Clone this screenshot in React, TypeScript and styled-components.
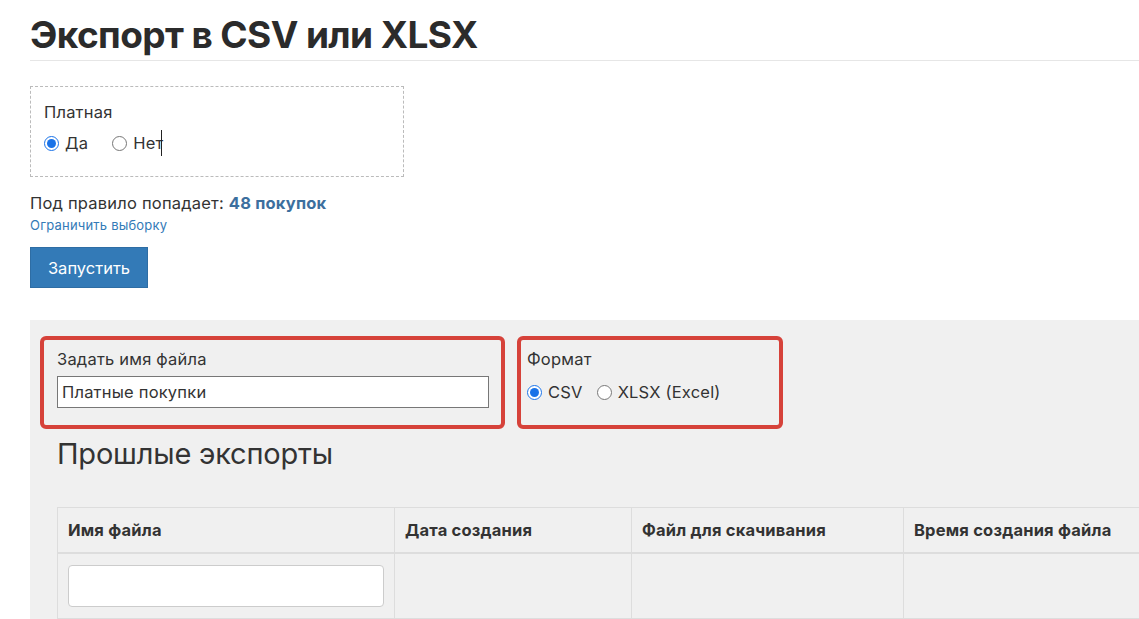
import React from 'react';
import styled, { createGlobalStyle } from 'styled-components';

const GlobalStyle = createGlobalStyle`
  html, body {
    margin: 0;
    padding: 0;
    background: #fff;
    overflow: hidden;
  }
  body {
    font-family: Inter, "Noto Sans", Arial, sans-serif;
    color: #333;
  }
`;

const Page = styled.div`
  width: 1260px;
  padding-left: 30px;
`;

const Title = styled.h1`
  margin: 0;
  padding-top: 14px;
  font-size: 37px;
  font-weight: 700;
  line-height: 42px;
  letter-spacing: -0.6px;
  color: #2b2b2b;
  padding-bottom: 4px;
  border-bottom: 1px solid #e6e6e6;
`;

const FilterBox = styled.div`
  margin-top: 25px;
  width: 374px;
  height: 91px;
  box-sizing: border-box;
  border: 1px dashed #bbb;
  padding: 14px 13px;
`;

const Label = styled.div`
  font-size: 16.5px;
  letter-spacing: 0.2px;
  line-height: 22px;
  color: #333;
`;

const RadioRow = styled.div<{ $gap?: number; $top?: number }>`
  display: flex;
  align-items: center;
  gap: ${(p) => p.$gap ?? 16}px;
  margin-top: ${(p) => p.$top ?? 8}px;
`;

const RadioLabel = styled.label`
  display: flex;
  align-items: center;
  gap: 6px;
  font-size: 16.5px;
  letter-spacing: 0.2px;
  color: #333;

  input {
    margin: 0;
    width: 15px;
    height: 15px;
    accent-color: #1a73e8;
  }
`;

const Caret = styled.span`
  display: inline-block;
  width: 1px;
  height: 26px;
  background: #222;
  margin-left: -8px;
`;

const Summary = styled.div`
  margin-top: 16px;
  font-size: 16.5px;
  letter-spacing: 0.2px;
  line-height: 20px;

  b {
    color: #3c6f9e;
    font-weight: 700;
  }
`;

const LinkText = styled.a`
  display: block;
  margin-top: 2px;
  font-size: 13px;
  letter-spacing: 0.2px;
  line-height: 20px;
  color: #337ab7;
  text-decoration: none;
`;

const RunButton = styled.button`
  margin-top: 12px;
  height: 41px;
  width: 118px;
  border: 1px solid #2e6da4;
  background: #337ab7;
  color: #fff;
  font-family: inherit;
  font-size: 16.5px;
  padding: 0;
`;

const Panel = styled.div`
  margin-top: 32px;
  background: #f0f0f0;
  padding: 16px 0 20px 10px;
  min-height: 300px;
`;

const Options = styled.div`
  display: flex;
  gap: 12px;
`;

const RedBox = styled.div<{ $width: number }>`
  width: ${(p) => p.$width}px;
  height: 93px;
  box-sizing: border-box;
  border: 4px solid #d6423a;
  border-radius: 6px;
  padding: 8px 13px;
`;

const FormatBox = styled(RedBox)`
  padding-left: 6px;
`;

const NameInput = styled.input`
  margin-top: 6px;
  width: 432px;
  height: 32px;
  box-sizing: border-box;
  border: 1px solid #777;
  padding: 0 4px;
  font-family: inherit;
  font-size: 16.5px;
  letter-spacing: 0.2px;
  color: #333;
  background: #fff;
`;

const SubTitle = styled.h2`
  margin: 5px 0 0 17px;
  font-size: 29px;
  font-weight: 400;
  line-height: 40px;
  letter-spacing: -0.2px;
  color: #333;
`;

const Table = styled.table`
  margin: 33px 0 0 17px;
  border-collapse: collapse;
  table-layout: fixed;
`;

// $w is the full column width; padding and border take 21px of it
const Th = styled.th<{ $w: number }>`
  width: ${(p) => p.$w - 21}px;
  text-align: left;
  font-size: 16.5px;
  letter-spacing: 0.2px;
  font-weight: 700;
  color: #333;
  height: 44px;
  padding: 0 10px;
  border: 1px solid #ddd;
  border-bottom: 2px solid #ddd;
  white-space: nowrap;
`;

const Td = styled.td`
  height: 64px;
  padding: 0 10px;
  border: 1px solid #ddd;
`;

const FilterInput = styled.input`
  width: 100%;
  height: 42px;
  box-sizing: border-box;
  border: 1px solid #ccc;
  border-radius: 4px;
  background: #fff;
`;

export default function App() {
  return (
    <Page>
      <GlobalStyle />
      <Title>Экспорт в CSV или XLSX</Title>

      <FilterBox>
        <Label>Платная</Label>
        <RadioRow $gap={24} $top={7}>
          <RadioLabel>
            <input type="radio" name="paid" defaultChecked />
            Да
          </RadioLabel>
          <RadioLabel>
            <input type="radio" name="paid" />
            Нет<Caret />
          </RadioLabel>
        </RadioRow>
      </FilterBox>

      <Summary>
        Под правило попадает: <b>48 покупок</b>
      </Summary>
      <LinkText href="#">Ограничить выборку</LinkText>
      <RunButton>Запустить</RunButton>

      <Panel>
        <Options>
          <RedBox $width={465}>
            <Label>Задать имя файла</Label>
            <NameInput defaultValue="Платные покупки" />
          </RedBox>
          <FormatBox $width={266}>
            <Label>Формат</Label>
            <RadioRow $gap={14} $top={12}>
              <RadioLabel>
                <input type="radio" name="fmt" defaultChecked />
                CSV
              </RadioLabel>
              <RadioLabel>
                <input type="radio" name="fmt" />
                XLSX (Excel)
              </RadioLabel>
            </RadioRow>
          </FormatBox>
        </Options>

        <SubTitle>Прошлые экспорты</SubTitle>

        <Table>
          <thead>
            <tr>
              <Th $w={337}>Имя файла</Th>
              <Th $w={237}>Дата создания</Th>
              <Th $w={272}>Файл для скачивания</Th>
              <Th $w={260}>Время создания файла</Th>
            </tr>
          </thead>
          <tbody>
            <tr>
              <Td>
                <FilterInput />
              </Td>
              <Td />
              <Td />
              <Td />
            </tr>
          </tbody>
        </Table>
      </Panel>
    </Page>
  );
}
